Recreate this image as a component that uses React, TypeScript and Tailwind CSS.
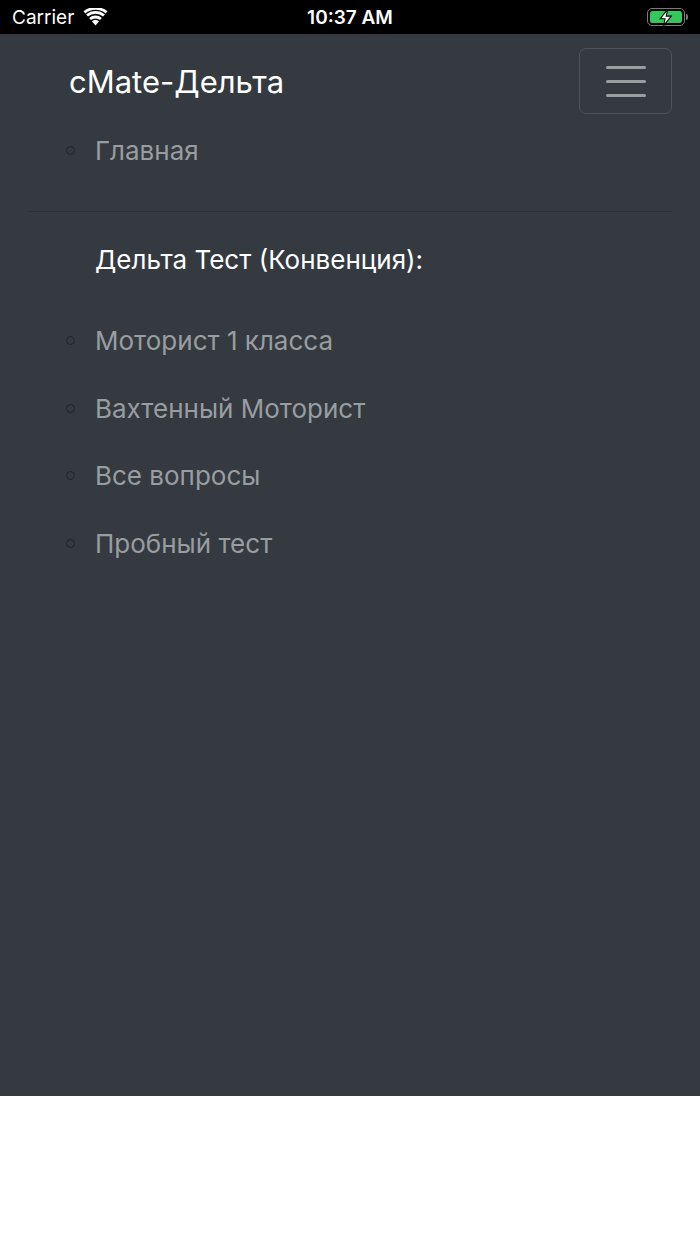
export default function App() {
  const items = ['Моторист 1 класса', 'Вахтенный Моторист', 'Все вопросы', 'Пробный тест'];

  return (
    <div className="w-[700px] bg-white" style={{ fontFamily: 'Inter, "Noto Sans", sans-serif' }}>
      {/* Status bar */}
      <div className="relative flex h-[34px] items-center bg-black px-3 text-white">
        <div className="flex items-center gap-[9px]">
          <span className="text-[19px] leading-none">Carrier</span>
          <svg width="25" height="18" viewBox="0 0 24 18" fill="white">
            <path d="M12 17.5l3.6-4.3a5.6 5.6 0 0 0-7.2 0z" />
            <path d="M5.6 9.9l1.9 2.2a7 7 0 0 1 9 0l1.9-2.2a10 10 0 0 0-12.8 0z" />
            <path d="M2.6 6.4l1.9 2.2a11.6 11.6 0 0 1 15 0l1.9-2.2a14.5 14.5 0 0 0-18.8 0z" />
            <path d="M0 3.3l1.8 2.2a16 16 0 0 1 20.4 0L24 3.3a19 19 0 0 0-24 0z" />
          </svg>
        </div>
        <span className="absolute left-1/2 -translate-x-1/2 text-[19px] font-semibold leading-none">
          10:37 AM
        </span>
        <div className="ml-auto flex items-center">
          <div className="flex h-[18px] w-[38px] items-center rounded-[5px] border-[1.5px] border-[#7a7a7a] p-[2px]">
            <div className="relative flex h-full w-full items-center justify-center rounded-[2.5px] bg-[#34c759]">
              <svg width="14" height="17" viewBox="0 0 12 14" className="-my-1">
                <path d="M7.5 0L1 8h4.2l-1.2 6 6.5-8.2H6.2z" fill="white" stroke="black" strokeWidth="0.9" />
              </svg>
            </div>
          </div>
          <div className="ml-[1px] h-[6px] w-[2px] rounded-r-sm bg-[#7a7a7a]" />
        </div>
      </div>

      {/* Navbar */}
      <div className="h-[1062px] bg-[#343a40] px-[28px]">
        <div className="flex items-center justify-between pt-[14px]">
          <span className="pl-[41px] text-[31px] leading-none text-white">cMate-Дельта</span>
          <button className="flex h-[66px] w-[93px] flex-col items-center justify-center gap-[11px] rounded-[7px] border border-[#4d5358]">
            <span className="h-[3px] w-[40px] rounded-full bg-[#9a9da0]" />
            <span className="h-[3px] w-[40px] rounded-full bg-[#9a9da0]" />
            <span className="h-[3px] w-[40px] rounded-full bg-[#9a9da0]" />
          </button>
        </div>

        <div className="mt-[2px] flex h-[68px] items-center text-[26px] text-[#9a9da0]">
          <span className="ml-[38px] mr-[20px] h-[9px] w-[9px] rounded-full border-[1.5px] border-[#1f2327]" />
          Главная
        </div>

        <div className="mt-[27px] h-px bg-[#2c3135]" />

        <div className="flex h-[95px] items-center pl-[67px] text-[26px] text-white">
          Дельта Тест (Конвенция):
        </div>

        {items.map((item) => (
          <div key={item} className="flex h-[67.5px] items-center text-[26px] text-[#9a9da0]">
            <span className="ml-[38px] mr-[20px] h-[9px] w-[9px] rounded-full border-[1.5px] border-[#1f2327]" />
            {item}
          </div>
        ))}
      </div>
      <div className="h-[148px] bg-white" />
    </div>
  );
}
